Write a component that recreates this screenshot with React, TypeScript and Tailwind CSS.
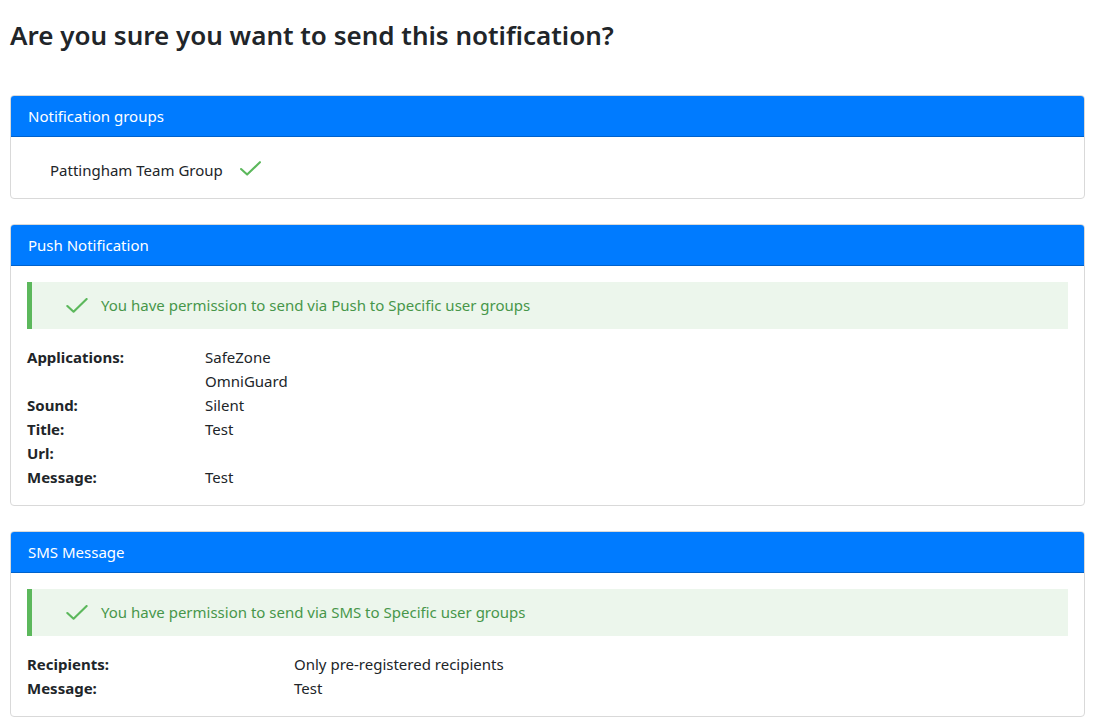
import React from "react";

const font = { fontFamily: '"Segoe UI", "Noto Sans", sans-serif' };

function Check({ className }: { className?: string }) {
  return (
    <svg viewBox="0 0 20 14" className={className} fill="none">
      <path d="M1 7.5 L6.8 12.8 L19 1" stroke="#5cb85c" strokeWidth="2" strokeLinecap="round" strokeLinejoin="round" />
    </svg>
  );
}

function Card({ title, children }: { title: string; children: React.ReactNode }) {
  return (
    <div className="border border-[#d9d9d9] rounded-[4px] overflow-hidden bg-white">
      <div className="bg-[#007bff] text-white text-[15px] leading-[24px] px-[17px] pt-[8px] pb-[8px] border-b border-[#0062cc]">
        {title}
      </div>
      {children}
    </div>
  );
}

function Permission({ text }: { text: string }) {
  return (
    <div className="flex items-center h-[47px] bg-[#ecf6ec] border-l-[5px] border-[#5cb85c] pl-[34px] mb-[16px]">
      <Check className="w-[22px] h-[15px] mr-[13px]" />
      <span className="text-[#47964a] text-[15px]">{text}</span>
    </div>
  );
}

function Row({ label, value, labelW }: { label: string; value?: string; labelW: string }) {
  return (
    <div className="flex leading-[24px] text-[15px]">
      <div className={`${labelW} font-bold text-[#212529]`}>{label}</div>
      <div className="text-[#212529]">{value}</div>
    </div>
  );
}

export default function App() {
  return (
    <div className="min-h-screen bg-white pl-[10px] pr-[16px] pt-[14px]" style={font}>
      <h2 className="text-[26px] leading-[42px] font-semibold text-[#212529] mb-[39px]">
        Are you sure you want to send this notification?
      </h2>

      <div className="flex flex-col gap-[25px]">
        <Card title="Notification groups">
          <div className="h-[61px] flex items-center pl-[39px] pt-[6px]">
            <span className="text-[15px] text-[#212529]">Pattingham Team Group</span>
            <Check className="w-[21px] h-[15px] ml-[17px] -mt-[4px]" />
          </div>
        </Card>

        <Card title="Push Notification">
          <div className="p-[16px]">
            <Permission text="You have permission to send via Push to Specific user groups" />
            <Row label="Applications:" value="SafeZone" labelW="w-[178px]" />
            <Row label="" value="OmniGuard" labelW="w-[178px]" />
            <Row label="Sound:" value="Silent" labelW="w-[178px]" />
            <Row label="Title:" value="Test" labelW="w-[178px]" />
            <Row label="Url:" labelW="w-[178px]" />
            <Row label="Message:" value="Test" labelW="w-[178px]" />
          </div>
        </Card>

        <Card title="SMS Message">
          <div className="p-[16px]">
            <Permission text="You have permission to send via SMS to Specific user groups" />
            <Row label="Recipients:" value="Only pre-registered recipients" labelW="w-[267px]" />
            <Row label="Message:" value="Test" labelW="w-[267px]" />
          </div>
        </Card>
      </div>
    </div>
  );
}
